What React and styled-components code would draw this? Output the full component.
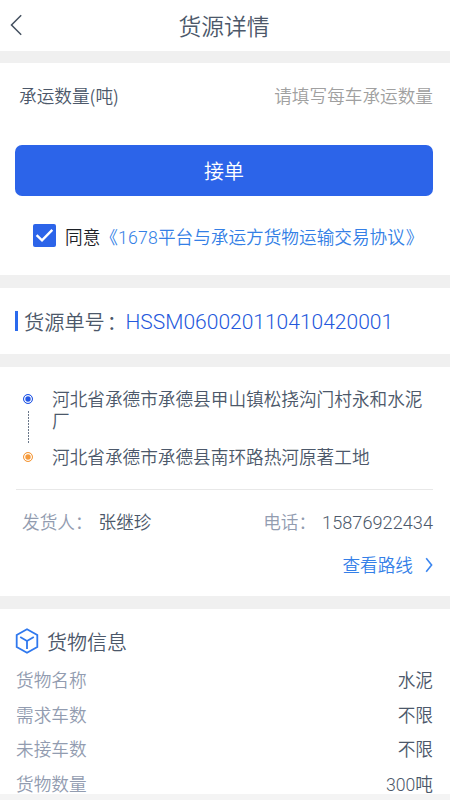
import React from 'react';
import styled, { createGlobalStyle } from 'styled-components';

const cargo = [
  { label: '货物名称', value: '水泥' },
  { label: '需求车数', value: '不限' },
  { label: '未接车数', value: '不限' },
  { label: '货物数量', amount: '300', value: '吨' },
];

const App = () => {
  return (
    <Page>
      <GlobalStyle />
      <Header>
        <BackButton aria-label="返回">
          <svg width="13" height="22" viewBox="0 0 13 22" fill="none" stroke="#44505f" strokeWidth="1.5">
            <path d="M11.2 1.3L1.5 11L11.2 20.7" />
          </svg>
        </BackButton>
        <Title>货源详情</Title>
      </Header>

      <OrderPanel>
        <Field>
          <span>承运数量(吨)</span>
          <Placeholder>请填写每车承运数量</Placeholder>
        </Field>
        <SubmitButton>接单</SubmitButton>
        <Agreement>
          <Checkbox>
            <svg width="23" height="23" viewBox="0 0 23 23" fill="none" stroke="#fff" strokeWidth="2.4">
              <path d="M3.6 11.2L9 16.4L19.3 5.8" />
            </svg>
          </Checkbox>
          <span>同意<Link>《<AgreementCode>1678</AgreementCode>平台与承运方货物运输交易协议<CloseMark>》</CloseMark></Link></span>
        </Agreement>
      </OrderPanel>

      <NumberPanel>
        <Marker />
        <NumberLabel>货源单号<Colon>：</Colon></NumberLabel>
        <OrderNumber>HSSM060020110410420001</OrderNumber>
      </NumberPanel>

      <RoutePanel>
        <Route>
          <Track>
            <Stop $color="#2458e6" />
            <Dots />
            <Stop $color="#f59a3c" />
          </Track>
          <Addresses>
            <Address>河北省承德市承德县甲山镇松挠沟门村永和水泥厂</Address>
            <Address>河北省承德市承德县南环路热河原著工地</Address>
          </Addresses>
        </Route>
        <Contact>
          <ContactItem>
            <Muted>发货人：</Muted>
            <span>张继珍</span>
          </ContactItem>
          <ContactItem>
            <Muted>电话：</Muted>
            <Phone>15876922434</Phone>
          </ContactItem>
        </Contact>
        <RouteLink>
          查看路线
          <svg width="8" height="16" viewBox="0 0 8 16" fill="none" stroke="#3b86f0" strokeWidth="1.6">
            <path d="M1.2 1.2L6.6 8L1.2 14.8" />
          </svg>
        </RouteLink>
      </RoutePanel>

      <CargoPanel>
        <SectionTitle>
          <svg width="24" height="26" viewBox="0 0 24 26" fill="none" stroke="#2f78ee" strokeWidth="1.8">
            <path d="M12 1.2L22.3 7V19L12 24.8L1.7 19V7Z" />
            <path d="M5.2 9L12 13L18.8 9M12 13V21" />
          </svg>
          <span>货物信息</span>
        </SectionTitle>
        {cargo.map((item) => (
          <CargoRow key={item.label}>
            <Muted>{item.label}</Muted>
            <span>
              {item.amount && <Digits>{item.amount}</Digits>}
              {item.value}
            </span>
          </CargoRow>
        ))}
      </CargoPanel>
    </Page>
  );
};

const GlobalStyle = createGlobalStyle`
  * {
    box-sizing: border-box;
  }

  body {
    margin: 0;
    background: #f4f4f4;
    font-family: 'Noto Sans CJK SC', sans-serif;
    font-weight: 350;
  }
`;

const Page = styled.div`
  display: flex;
  flex-direction: column;
  width: 450px;
  height: 800px;
  color: #4c586a;
  font-size: 17.65px;
  line-height: 22px;
  white-space: nowrap;
`;

const Panel = styled.section`
  flex: none;
  background: #fff;
  border-top: 13px solid #f0f0f0;
`;

const Header = styled.header`
  display: grid;
  grid-template-columns: 60px 1fr 60px;
  align-items: center;
  flex: none;
  height: 51px;
  background: #fff;
`;

const BackButton = styled.button`
  display: flex;
  padding: 0 0 2px 10px;
  border: 0;
  background: none;
`;

const Title = styled.h1`
  margin: 0;
  padding-right: 2px;
  font-size: 22.8px;
  font-weight: inherit;
  text-align: center;
`;

const OrderPanel = styled(Panel)`
  height: 224px;
  padding: 22px 17px 0 15px;
  border-top-width: 12px;
`;

const Field = styled.div`
  display: flex;
  justify-content: space-between;
  padding-left: 4px;
`;

const Placeholder = styled.span`
  color: #a0a0a0;
`;

const SubmitButton = styled.button`
  display: block;
  width: 418px;
  height: 51px;
  margin-top: 38px;
  padding: 0;
  border: 0;
  border-radius: 7px;
  background: #2c64e9;
  color: #fff;
  font-family: inherit;
  font-size: 20px;
  font-weight: inherit;
`;

const Agreement = styled.label`
  display: flex;
  align-items: center;
  gap: 9px;
  height: 23px;
  margin-top: 28px;
  padding-left: 18px;
  color: #1c2026;

  > span:last-child {
    padding-top: 2px;
  }
`;

const Checkbox = styled.span`
  display: flex;
  width: 23px;
  height: 23px;
  border-radius: 2px;
  background: #2c64e9;
`;

const Link = styled.span`
  color: #347fe6;
`;

const CloseMark = styled.span`
  margin-left: 1px;
`;

const Digits = styled.span`
  font-family: Roboto, sans-serif;
  line-height: 1;
`;

const AgreementCode = styled(Digits)`
  letter-spacing: 0.2px;
`;

const NumberPanel = styled(Panel)`
  display: flex;
  align-items: center;
  height: 79px;
  padding: 0 15px 0 15px;
  font-size: 20.2px;
`;

const Marker = styled.i`
  width: 3px;
  height: 20px;
  margin-right: 6px;
  background: #2a6aed;
`;

const NumberLabel = styled.span`
  width: 101.5px;
  padding-top: 2px;
`;

const Colon = styled.span`
  display: inline-block;
  width: 18px;
  margin-left: 2px;
`;

const OrderNumber = styled(Digits)`
  padding-top: 3px;
  color: #2458dc;
  font-size: 21px;
`;

const RoutePanel = styled(Panel)`
  height: 242px;
  padding: 21px 17px 0 16px;
`;

const Route = styled.div`
  display: flex;
  height: 102px;
  border-bottom: 1px solid #e8e8e8;
`;

const Track = styled.div`
  display: flex;
  flex-direction: column;
  align-items: center;
  width: 24px;
  padding-top: 6px;
`;

const Stop = styled.i`
  width: 10px;
  height: 10px;
  border: 1px solid ${(props) => props.$color};
  border-radius: 50%;
  background: ${(props) => props.$color};
  box-shadow: inset 0 0 0 1.3px #fff;
`;

const Dots = styled.i`
  width: 1px;
  height: 33px;
  margin: 7px 0 8px;
  background: repeating-linear-gradient(#6b788a 0 2px, #fff 2px 3px);
`;

const Addresses = styled.div`
  display: flex;
  flex-direction: column;
  gap: 14px;
  padding-left: 12px;
  font-size: 17.65px;
  white-space: normal;
`;

const Address = styled.div`
  width: 376px;
`;

const Contact = styled.div`
  display: flex;
  justify-content: space-between;
  padding: 21px 0 0 6px;
`;

const ContactItem = styled.div`
  display: flex;
  align-items: baseline;
  gap: 6px;
`;

const Phone = styled(Digits)`
  font-size: 18.1px;
  letter-spacing: 0.05px;
`;

const Muted = styled.span`
  color: #929cb0;
`;

const RouteLink = styled.div`
  display: flex;
  align-items: center;
  justify-content: flex-end;
  gap: 12px;
  margin-top: 21px;
  color: #347fe8;
`;

const CargoPanel = styled(Panel)`
  height: 198px;
  padding: 18px 17px 0 16px;
`;

const SectionTitle = styled.h2`
  display: flex;
  align-items: center;
  gap: 8px;
  height: 27px;
  margin: 0 0 9px;
  font-size: 20px;
  font-weight: inherit;

  svg {
    margin-left: -1px;
  }

  span {
    padding-top: 2px;
  }
`;

const CargoRow = styled.div`
  display: flex;
  align-items: center;
  justify-content: space-between;
  height: 34.5px;
`;

export default App;
